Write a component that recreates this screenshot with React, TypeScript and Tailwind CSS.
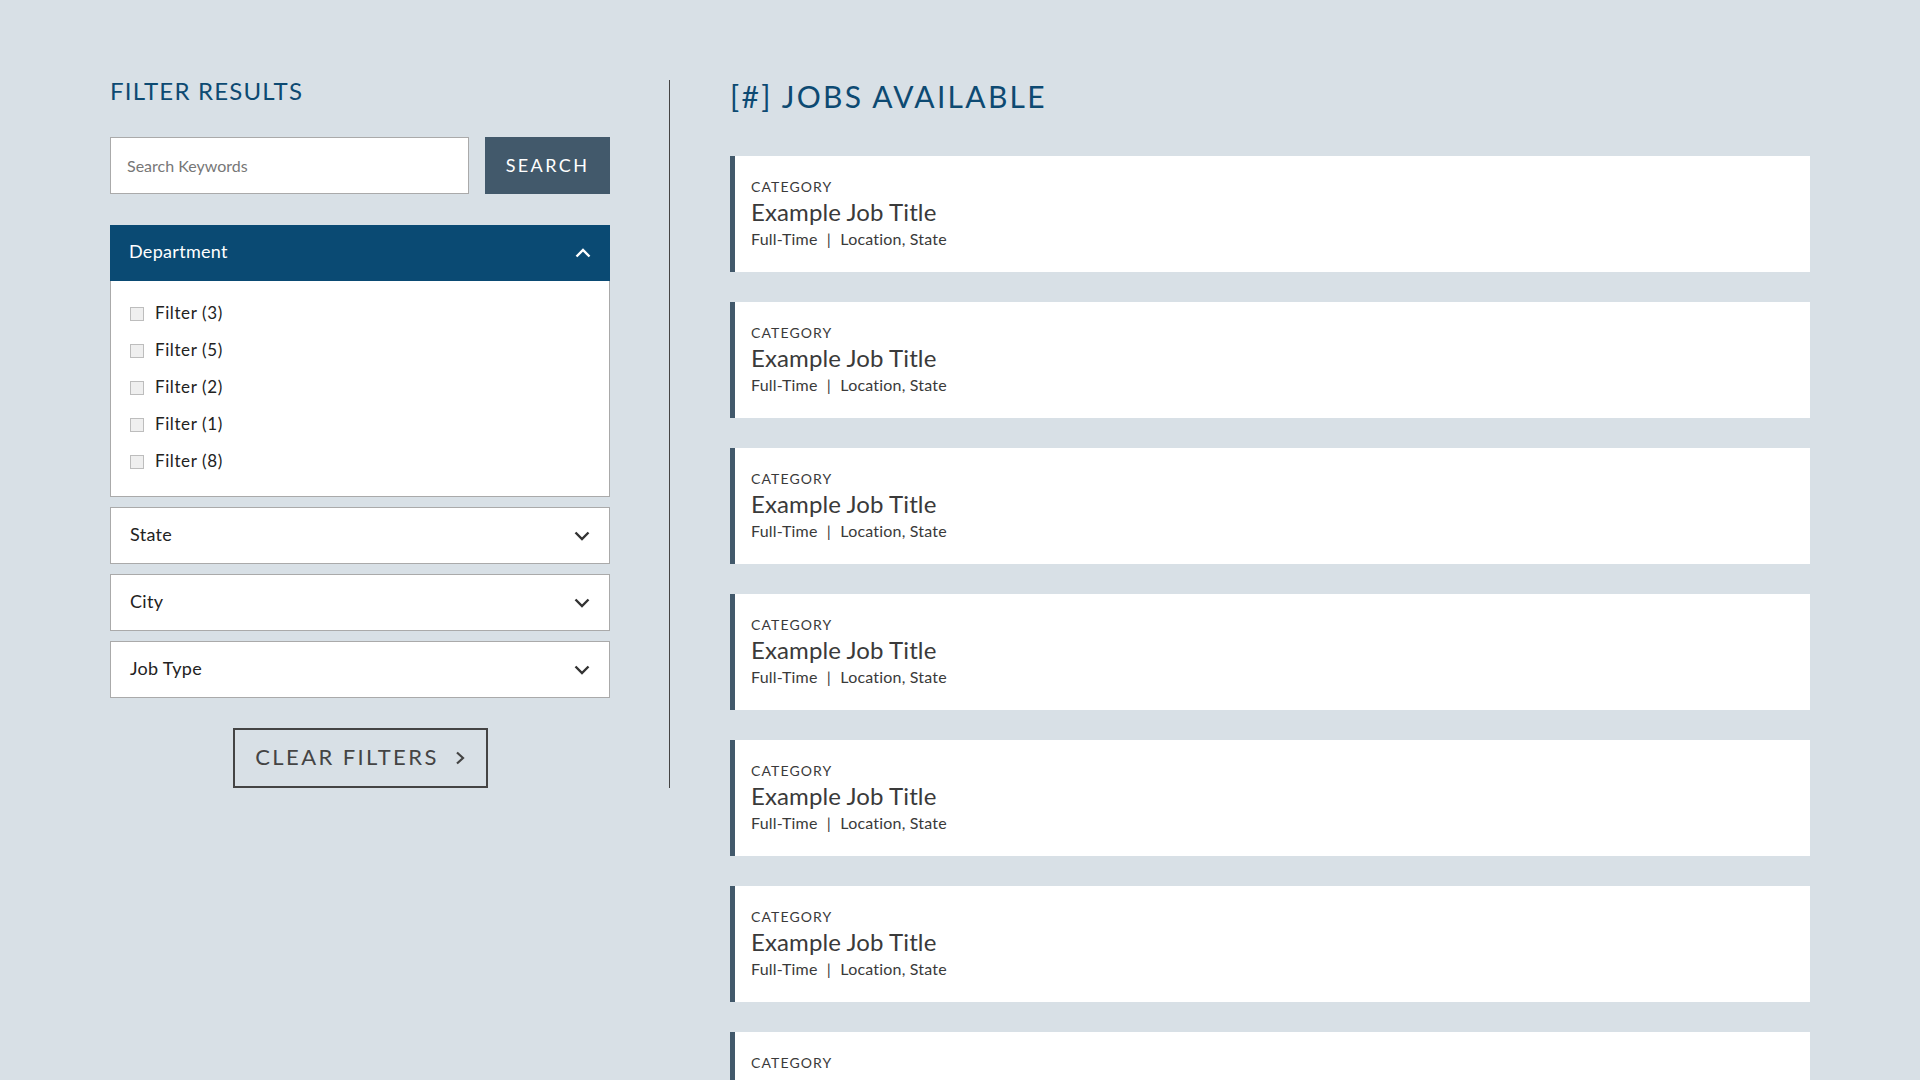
import React from "react";

const font = { fontFamily: "Lato, 'Open Sans', sans-serif" };

function Chevron({ dir, className }: { dir: "up" | "down"; className?: string }) {
  return (
    <svg width="16" height="10" viewBox="0 0 16 10" fill="none" className={className}>
      <path
        d={dir === "down" ? "M1.5 1.5 L8 8 L14.5 1.5" : "M1.5 8.5 L8 2 L14.5 8.5"}
        stroke="currentColor"
        strokeWidth="2.4"
        strokeLinejoin="miter"
      />
    </svg>
  );
}

const filters = ["Filter (3)", "Filter (5)", "Filter (2)", "Filter (1)", "Filter (8)"];
const collapsed = ["State", "City", "Job Type"];
const jobs = Array.from({ length: 8 }, (_, i) => i);

function JobCard() {
  return (
    <div className="flex h-[116px] w-full shrink-0 border-l-[5px] border-[#42596b] bg-white pl-[16px] pt-[22px] text-[#3a3a3a]">
      <div className="flex flex-col">
        <div className="text-[14px] leading-[18px] tracking-[1.1px]">CATEGORY</div>
        <div className="mt-[1px] text-[24px] leading-[30px] tracking-[0.1px]">Example Job Title</div>
        <div className="text-[16px] leading-[24px] tracking-[0.2px]">
          Full-Time <span className="mx-[5px]">|</span> Location, State
        </div>
      </div>
    </div>
  );
}

export default function App() {
  return (
    <div style={font} className="h-screen w-full overflow-hidden bg-[#d8e0e6]">
      <div className="flex items-start pl-[110px] pt-[80px]">
        {/* Filter sidebar */}
        <aside className="flex w-[560px] shrink-0 flex-col border-r border-[#444444] pr-[59px]">
          <h2 className="pt-[1px] text-[24px] leading-[20px] tracking-[1.2px] text-[#0d4a72]">FILTER RESULTS</h2>

          <div className="mt-[36px] flex gap-[16px]">
            <input
              type="text"
              placeholder="Search Keywords"
              className="h-[57px] w-[359px] border border-[#aaaaaa] bg-white px-[16px] text-[16px] text-[#333] placeholder:text-[#777777] outline-none"
              style={font}
            />
            <button className="h-[57px] w-[125px] bg-[#42596b] text-[18px] tracking-[2.4px] text-white">
              SEARCH
            </button>
          </div>

          <div className="mt-[31px] flex flex-col">
            <div className="flex h-[56px] items-center justify-between bg-[#0a4a73] pb-[3px] pl-[19px] pr-[19px] text-[18px] tracking-[0.3px] text-white">
              <span>Department</span>
              <Chevron dir="up" className="mt-[3px]" />
            </div>
            <div className="flex flex-col border border-t-0 border-[#aaaaaa] bg-white px-[19px] pb-[17px] pt-[13px]">
              {filters.map((f) => (
                <label key={f} className="flex h-[37px] items-center gap-[11px] text-[17px] tracking-[0.6px] text-[#222222]">
                  <span className="mt-[2px] h-[14px] w-[14px] border border-[#bdbdbd] bg-[#efefef]" />
                  {f}
                </label>
              ))}
            </div>
          </div>

          <div className="mt-[10px] flex flex-col gap-[10px]">
            {collapsed.map((c) => (
              <div
                key={c}
                className="flex h-[57px] items-center justify-between border border-[#aaaaaa] bg-white pb-[3px] pl-[19px] pr-[19px] text-[18px] tracking-[0.3px] text-[#222222]"
              >
                <span>{c}</span>
                <Chevron dir="down" className="mt-[3px] text-[#333333]" />
              </div>
            ))}
          </div>

          <div className="mt-[30px] flex justify-center">
            <button className="flex h-[60px] w-[255px] items-center justify-center gap-[16px] border-2 border-[#444444] pb-[3px] text-[22px] tracking-[2.4px] text-[#444444]">
              <span>CLEAR FILTERS</span>
              <svg width="10" height="14" viewBox="0 0 10 14" fill="none" className="mt-[3px]">
                <path d="M2 1.5 L8 7 L2 12.5" stroke="currentColor" strokeWidth="2.2" />
              </svg>
            </button>
          </div>
        </aside>

        {/* Job listings */}
        <main className="ml-[60px] flex w-[1080px] flex-col">
          <h1 className="pt-[3px] text-[30px] leading-[27px] tracking-[2.3px] text-[#0d4a72]">[#] JOBS AVAILABLE</h1>
          <div className="mt-[46px] flex flex-col gap-[30px]">
            {jobs.map((j) => (
              <JobCard key={j} />
            ))}
          </div>
        </main>
      </div>
    </div>
  );
}
